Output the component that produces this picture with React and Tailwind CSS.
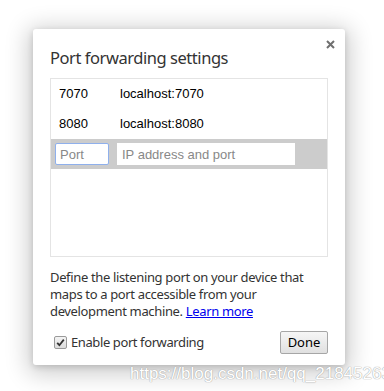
import { useState } from "react";

const RULES = [
  { port: "7070", target: "localhost:7070" },
  { port: "8080", target: "localhost:8080" },
];

const ui = { fontFamily: '"Noto Sans", "Open Sans", sans-serif' };
const mono = { fontFamily: '"Liberation Sans", Arial, sans-serif' };

function CheckBox({ checked, onChange }) {
  return (
    <button
      type="button"
      onClick={() => onChange(!checked)}
      className="flex h-[13px] w-[13px] items-center justify-center rounded-[2px] border border-[#9a9a9a] bg-gradient-to-b from-[#f4f4f4] to-[#dcdcdc]"
    >
      {checked && (
        <svg width="9" height="9" viewBox="0 0 9 9">
          <path d="M1.2 4.8 L3.4 7.2 L7.8 1.6" fill="none" stroke="#333" strokeWidth="1.8" />
        </svg>
      )}
    </button>
  );
}

export default function App() {
  const [enabled, setEnabled] = useState(true);

  return (
    <div className="relative h-[391px] w-[384px] overflow-hidden bg-white pl-[33px] pt-[29px]">
      <div
        className="relative flex h-[336px] w-[312px] flex-col rounded-[3px] bg-white px-[17px] text-[#333] shadow-[0_4px_23px_5px_rgba(0,0,0,0.2),0_2px_6px_rgba(0,0,0,0.15)]"
        style={ui}
      >
        <button type="button" className="absolute right-[9px] top-[10px] p-[1px]" aria-label="Close">
          <svg width="9" height="9" viewBox="0 0 9 9">
            <path d="M1 1 L8 8 M8 1 L1 8" stroke="#6f6f6f" strokeWidth="2" />
          </svg>
        </button>

        <h1 className="mt-[18px] text-[16.5px] leading-[21px] tracking-[-0.45px] text-[#333]">
          Port forwarding settings
        </h1>

        <div className="mt-[10px] h-[179px] border border-[#e4e4e4]" style={mono}>
          {RULES.map((r) => (
            <div key={r.port} className="flex h-[30px] items-center pl-[8px] text-[13px] text-black">
              <span className="w-[61px]">{r.port}</span>
              <span>{r.target}</span>
            </div>
          ))}
          <div className="flex h-[30px] items-center gap-[8px] bg-[#cccccc] pl-[4px]">
            <input
              placeholder="Port"
              className="h-[22px] w-[54px] rounded-[2px] border border-[#8fb0ec] bg-white px-[4px] text-[13px] text-black outline-none placeholder:text-[#888]"
            />
            <input
              placeholder="IP address and port"
              className="h-[22px] w-[178px] bg-white px-[5px] text-[13px] text-black outline-none placeholder:text-[#888]"
            />
          </div>
        </div>

        <p className="mt-[12px] text-[13px] leading-[17px] tracking-[-0.35px] text-[#333]">
          Define the listening port on your device that maps to a port accessible from your
          development machine.{" "}
          <a href="#" className="text-[#0000ee] underline">
            Learn more
          </a>
        </p>

        <div className="mt-[11px] flex items-center justify-between">
          <label className="flex items-center gap-[4px] pl-[4px] text-[13px] tracking-[-0.4px] text-[#333]">
            <CheckBox checked={enabled} onChange={setEnabled} />
            Enable port forwarding
          </label>
          <button
            type="button"
            className="h-[23px] w-[48px] rounded-[2px] border border-[#a6a6a6] bg-gradient-to-b from-[#f6f6f6] to-[#e0e0e0] text-[13px] text-black"
          >
            Done
          </button>
        </div>
      </div>

      <div
        className="absolute left-[130px] top-[364px] whitespace-nowrap text-[17px] leading-[20px] text-white [text-shadow:0_0_1px_#9a9a9a,0_0_1px_#b0b0b0]"
        style={mono}
      >
        https://blog.csdn.net/qq_21845263
      </div>
    </div>
  );
}
